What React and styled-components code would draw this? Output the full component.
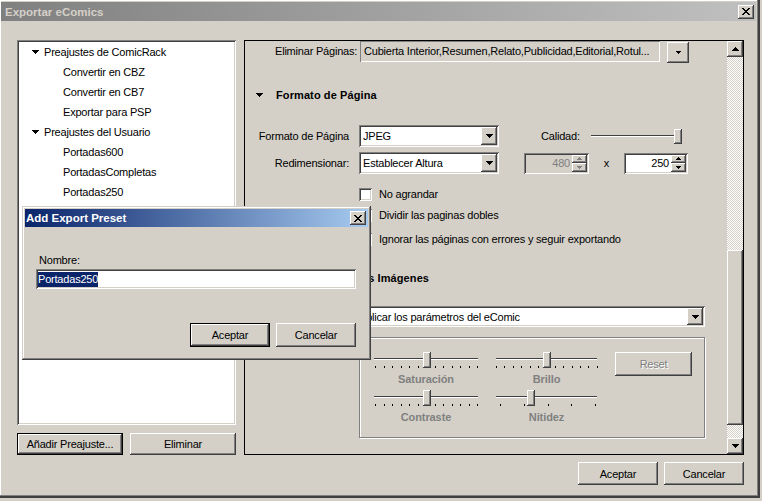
import React from 'react';
import styled, { createGlobalStyle, css } from 'styled-components';

const Global = createGlobalStyle`
  html, body { margin: 0; padding: 0; background: #d4d0c8; }
  body {
    font-family: "Liberation Sans", Arial, sans-serif;
    font-size: 11px;
    letter-spacing: -0.2px;
    color: #000;
  }
  * { box-sizing: border-box; }
`;

const raised = css`
  box-shadow: inset -1px -1px #404040, inset 1px 1px #fff, inset -2px -2px #808080, inset 2px 2px #d4d0c8;
`;
const sunken = css`
  box-shadow: inset 1px 1px #808080, inset -1px -1px #fff, inset 2px 2px #404040, inset -2px -2px #d4d0c8;
`;
const defaultRaised = css`
  box-shadow: inset 0 0 0 1px #000, inset -2px -2px #404040, inset 2px 2px #fff, inset -3px -3px #808080, inset 3px 3px #d4d0c8;
`;

/* ---------- glyphs ---------- */
const Tri = ({ dir = 'down', size = 4, color = '#000' }) => {
  const w = size * 2 - 1;
  const rects = [];
  for (let i = 0; i < size; i++) {
    const y = dir === 'down' ? i : size - 1 - i;
    rects.push(<rect key={i} x={i} y={y} width={w - 2 * i} height={1} />);
  }
  return (
    <svg width={w} height={size} fill={color} shapeRendering="crispEdges" style={{ display: 'block' }}>
      {rects}
    </svg>
  );
};

const XGlyph = () => {
  const rows = [
    [[0, 2], [6, 2]],
    [[1, 2], [5, 2]],
    [[2, 4]],
    [[3, 2]],
    [[2, 4]],
    [[1, 2], [5, 2]],
    [[0, 2], [6, 2]],
  ];
  return (
    <svg width="8" height="7" fill="#000" shapeRendering="crispEdges" style={{ display: 'block' }}>
      {rows.map((r, y) => r.map(([x, w], i) => <rect key={`${y}-${i}`} x={x} y={y} width={w} height={1} />))}
    </svg>
  );
};

/* ---------- window chrome ---------- */
const Window = styled.div`
  position: relative;
  width: 760px;
  height: 498px;
  padding: 2px 0 0 1px;
  background: #d4d0c8;
  box-shadow: inset -1px -1px #404040, inset -2px -2px #404040, inset -3px -3px #808080, inset 1px 1px #fff;
  display: flex;
  flex-direction: column;
`;

const TitleBar = styled.div`
  height: ${p => (p.$active ? 18 : 19)}px;
  width: ${p => (p.$active ? 'auto' : '755px')};
  display: flex;
  align-items: center;
  justify-content: space-between;
  padding: 0 2px 0 ${p => (p.$active ? 1 : 4)}px;
  background: ${p =>
    p.$active ? 'linear-gradient(90deg, #0a246a, #a6caf0)' : 'linear-gradient(90deg, #808080, #c0c0c0)'};
  color: ${p => (p.$active ? '#fff' : '#d4d0c8')};
  font-weight: bold;
  font-size: 11.5px;
  letter-spacing: 0;
`;

const CloseButton = styled.div`
  width: 16px;
  height: 14px;
  background: #d4d0c8;
  ${raised};
  display: flex;
  align-items: center;
  justify-content: center;
`;

const Body = styled.div`
  padding: 19px 0 0 16px;
  display: flex;
  flex-direction: column;
`;

const Main = styled.div`
  display: grid;
  grid-template-columns: 219px 500px;
  column-gap: 8px;
  height: 415px;
`;

const LeftCol = styled.div`
  display: flex;
  flex-direction: column;
  gap: 8px;
`;

const Tree = styled.div`
  flex: 1;
  background: #fff;
  ${sunken};
  padding: 2px;
`;

const TreeRow = styled.div`
  height: 20px;
  display: flex;
  align-items: center;
  gap: 5px;
  padding-left: ${p => p.$indent}px;
  white-space: nowrap;
`;

const ButtonRow = styled.div`
  display: flex;
  gap: ${p => p.$gap || 7}px;
  justify-content: ${p => p.$justify || 'flex-start'};
  margin-top: ${p => p.$mt || 0}px;
`;

const Button = styled.div`
  width: ${p => p.$w}px;
  height: ${p => p.$h || 22}px;
  background: #d4d0c8;
  ${p => (p.$default ? defaultRaised : raised)};
  display: flex;
  align-items: center;
  justify-content: center;
  color: ${p => (p.$disabled ? '#808080' : '#000')};
  text-shadow: ${p => (p.$disabled ? '1px 1px #fff' : 'none')};
  white-space: nowrap;
`;

const Footer = styled.div`
  margin-top: 7px;
  width: 727px;
  display: flex;
  justify-content: flex-end;
  gap: 6px;
`;

/* ---------- right panel ---------- */
const Panel = styled.div`
  border: 1px solid #000;
  display: flex;
  overflow: hidden;
`;

const PanelContent = styled.div`
  flex: 1;
  display: flex;
  flex-direction: column;
  overflow: hidden;
`;

const FieldRow = styled.div`
  height: 22px;
  display: flex;
  align-items: flex-start;
  padding-left: 30px;
`;

const FieldLabel = styled.div`
  width: 85px;
  line-height: 21px;
  white-space: nowrap;
`;

const ReadOnlyField = styled.div`
  width: 300px;
  height: 21px;
  background: #d4d0c8;
  box-shadow: inset 1px 1px #808080, inset -1px -1px #fff;
  padding: 0 3px 0 4px;
  line-height: 20px;
  white-space: nowrap;
  overflow: hidden;
`;

const DropButton = styled.div`
  margin: 1px 0 0 7px;
  width: 22px;
  height: 21px;
  background: #d4d0c8;
  ${raised};
  display: flex;
  align-items: center;
  justify-content: center;
`;

const SectionHeader = styled.div`
  margin-top: ${p => p.$mt}px;
  height: 16px;
  display: flex;
  align-items: center;
  gap: 13px;
  padding-left: 11px;
  font-weight: bold;
  letter-spacing: 0.1px;
  white-space: nowrap;
`;

const FormGrid = styled.div`
  margin-top: 22px;
  display: grid;
  grid-template-columns: 104px 140px 1fr;
  grid-auto-rows: 22px;
  column-gap: 10px;
  row-gap: 5px;
`;

const FormLabel = styled.div`
  text-align: right;
  line-height: 22px;
  white-space: nowrap;
`;

const ExtraCell = styled.div`
  padding-left: 15px;
  display: flex;
  align-items: center;
`;

const Combo = styled.div`
  width: ${p => p.$w}px;
  height: ${p => p.$h || 22}px;
  margin-left: ${p => p.$ml || 0}px;
  margin-top: ${p => p.$mt || 0}px;
  background: #fff;
  ${sunken};
  padding: 2px;
  display: flex;
  align-items: center;
`;

const ComboText = styled.span`
  flex: 1;
  padding-left: 2px;
  white-space: nowrap;
  overflow: hidden;
`;

const ComboButton = styled.div`
  width: 16px;
  height: 100%;
  background: #d4d0c8;
  ${raised};
  display: flex;
  align-items: center;
  justify-content: center;
`;

const SideLabel = styled.div`
  margin-left: 17px;
  width: 50px;
  white-space: nowrap;
`;

const Slider = styled.div`
  position: relative;
  width: ${p => p.$w}px;
  height: ${p => p.$h}px;
`;

const SliderChannel = styled.div`
  position: absolute;
  left: 0;
  right: 0;
  top: ${p => p.$top}px;
  height: 2px;
  border-top: 1px solid #404040;
  border-bottom: 1px solid #fff;
`;

const SliderThumb = styled.div`
  position: absolute;
  top: 0;
  width: 8px;
  height: ${p => p.$h}px;
  background: #d4d0c8;
  ${raised};
`;

const Tick = styled.div`
  position: absolute;
  top: 14px;
  width: 1px;
  height: 2px;
  background: #000;
`;

const Spin = styled.div`
  width: ${p => p.$w}px;
  height: 21px;
  background: ${p => (p.$disabled ? '#d4d0c8' : '#fff')};
  ${sunken};
  padding: 2px;
  display: flex;
`;

const SpinValue = styled.span`
  flex: 1;
  text-align: right;
  padding-right: 2px;
  line-height: 17px;
  color: ${p => (p.$disabled ? '#808080' : '#000')};
`;

const SpinButtons = styled.div`
  width: 15px;
  display: flex;
  flex-direction: column;
`;

const SpinButton = styled.div`
  flex: 1;
  background: #d4d0c8;
  ${raised};
  display: flex;
  align-items: center;
  justify-content: center;
`;

const Times = styled.div`
  width: 35px;
  text-align: center;
`;

const CheckList = styled.div`
  margin-top: 10px;
  padding-left: 114px;
  display: flex;
  flex-direction: column;
`;

const CheckRow = styled.div`
  height: 20px;
  margin-top: ${p => p.$mt || 0}px;
  display: flex;
  align-items: center;
  gap: 7px;
  white-space: nowrap;
`;

const CheckBox = styled.div`
  width: 13px;
  height: 13px;
  background: #fff;
  ${sunken};
`;

const GroupBox = styled.div`
  margin: 10px 0 0 114px;
  width: 346px;
  height: 101px;
  border: 1px solid #808080;
  box-shadow: inset 1px 1px #fff, 1px 1px #fff;
  padding: 14px 0 0 14px;
  display: grid;
  grid-template-columns: 104px 101px 77px;
  grid-template-rows: 34px 34px;
  column-gap: 18px;
  row-gap: 4px;
`;

const AdjustSlider = styled.div`
  display: flex;
  flex-direction: column;
`;

const AdjustLabel = styled.div`
  height: 14px;
  line-height: 14px;
  text-align: center;
  font-weight: bold;
  color: #808080;
  letter-spacing: -0.1px;
`;

const ScrollBar = styled.div`
  width: 16px;
  display: flex;
  flex-direction: column;
`;

const ScrollArrow = styled.div`
  height: 16px;
  background: #d4d0c8;
  ${raised};
  display: flex;
  align-items: center;
  justify-content: center;
`;

const ScrollTrack = styled.div`
  height: ${p => (p.$h ? `${p.$h}px` : 'auto')};
  flex: ${p => (p.$h ? 'none' : 1)};
  background: repeating-conic-gradient(#fff 0% 25%, #d4d0c8 0% 50%) 0 0 / 2px 2px;
`;

const ScrollThumb = styled.div`
  height: ${p => p.$h}px;
  background: #d4d0c8;
  ${raised};
`;

/* ---------- dialog ---------- */
const Dialog = styled.div`
  position: absolute;
  left: 22px;
  top: 206px;
  width: 349px;
  height: 154px;
  background: #d4d0c8;
  box-shadow: inset -1px -1px #404040, inset 1px 1px #d4d0c8, inset -2px -2px #808080, inset 2px 2px #fff;
  padding: 3px;
  display: flex;
  flex-direction: column;
`;

const DialogBody = styled.div`
  padding: 0 12px 10px 11px;
  display: flex;
  flex-direction: column;
`;

const DialogLabel = styled.div`
  margin-top: 26px;
  height: 14px;
  line-height: 14px;
  padding-left: 3px;
`;

const TextInput = styled.div`
  margin-top: 2px;
  height: 20px;
  background: #fff;
  ${sunken};
  padding: 2px;
  display: flex;
  align-items: center;
`;

const Selection = styled.span`
  background: #0a246a;
  color: #fff;
  line-height: 15px;
`;

/* ---------- data ---------- */
const treeItems = [
  { label: 'Preajustes de ComicRack', parent: true },
  { label: 'Convertir en CBZ' },
  { label: 'Convertir en CB7' },
  { label: 'Exportar para PSP' },
  { label: 'Preajustes del Usuario', parent: true },
  { label: 'Portadas600' },
  { label: 'PortadasCompletas' },
  { label: 'Portadas250' },
];

const AdjSlider = ({ label, w, thumb, ticks }) => (
  <AdjustSlider>
    <Slider $w={w} $h={20}>
      <SliderChannel $top={6} />
      {ticks.map(t => (
        <Tick key={t} style={{ left: t }} />
      ))}
      <SliderThumb $h={16} style={{ left: thumb }} />
    </Slider>
    <AdjustLabel>{label}</AdjustLabel>
  </AdjustSlider>
);

const range = (n, start, step) => Array.from({ length: n }, (_, i) => Math.round(start + i * step));

export default function App() {
  return (
    <>
      <Global />
      <Window>
        <TitleBar>
          <span>Exportar eComics</span>
          <CloseButton>
            <XGlyph />
          </CloseButton>
        </TitleBar>
        <Body>
          <Main>
            <LeftCol>
              <Tree>
                {treeItems.map(it => (
                  <TreeRow key={it.label} $indent={it.parent ? 13 : 44}>
                    {it.parent && <Tri size={4} />}
                    <span>{it.label}</span>
                  </TreeRow>
                ))}
              </Tree>
              <ButtonRow>
                <Button $w={106} $default>
                  Añadir Preajuste...
                </Button>
                <Button $w={106}>Eliminar</Button>
              </ButtonRow>
            </LeftCol>

            <Panel>
              <PanelContent>
                <FieldRow>
                  <FieldLabel>Eliminar Páginas:</FieldLabel>
                  <ReadOnlyField>Cubierta Interior,Resumen,Relato,Publicidad,Editorial,Rotul...</ReadOnlyField>
                  <DropButton>
                    <Tri size={3} />
                  </DropButton>
                </FieldRow>

                <SectionHeader $mt={24}>
                  <Tri size={4} />
                  <span>Formato de Página</span>
                </SectionHeader>

                <FormGrid>
                  <FormLabel>Formato de Página</FormLabel>
                  <Combo $w={140}>
                    <ComboText>JPEG</ComboText>
                    <ComboButton>
                      <Tri size={4} />
                    </ComboButton>
                  </Combo>
                  <ExtraCell>
                    <SideLabel>Calidad:</SideLabel>
                    <Slider $w={90} $h={15}>
                      <SliderChannel $top={6} />
                      <SliderThumb $h={15} style={{ left: 83 }} />
                    </Slider>
                  </ExtraCell>

                  <FormLabel>Redimensionar:</FormLabel>
                  <Combo $w={140}>
                    <ComboText>Establecer Altura</ComboText>
                    <ComboButton>
                      <Tri size={4} />
                    </ComboButton>
                  </Combo>
                  <ExtraCell>
                    <Spin $w={65} $disabled>
                      <SpinValue $disabled>480</SpinValue>
                      <SpinButtons>
                        <SpinButton>
                          <Tri dir="up" size={3} color="#808080" />
                        </SpinButton>
                        <SpinButton>
                          <Tri size={3} color="#808080" />
                        </SpinButton>
                      </SpinButtons>
                    </Spin>
                    <Times>x</Times>
                    <Spin $w={64}>
                      <SpinValue>250</SpinValue>
                      <SpinButtons>
                        <SpinButton>
                          <Tri dir="up" size={3} />
                        </SpinButton>
                        <SpinButton>
                          <Tri size={3} />
                        </SpinButton>
                      </SpinButtons>
                    </Spin>
                  </ExtraCell>
                </FormGrid>

                <CheckList>
                  <CheckRow>
                    <CheckBox />
                    <span>No agrandar</span>
                  </CheckRow>
                  <CheckRow $mt={1}>
                    <CheckBox />
                    <span>Dividir las paginas dobles</span>
                  </CheckRow>
                  <CheckRow $mt={4}>
                    <CheckBox />
                    <span>Ignorar las páginas con errores y seguir exportando</span>
                  </CheckRow>
                </CheckList>

                <SectionHeader $mt={21}>
                  <Tri size={4} />
                  <span>Tratamiento de las Imágenes</span>
                </SectionHeader>

                <Combo $w={350} $h={21} $ml={110} $mt={20}>
                  <ComboText>Aplicar los parámetros del eComic</ComboText>
                  <ComboButton>
                    <Tri size={4} />
                  </ComboButton>
                </Combo>

                <GroupBox>
                  <AdjSlider label="Saturación" w={104} thumb={49} ticks={range(13, 1, 8.5)} />
                  <AdjSlider label="Brillo" w={101} thumb={47} ticks={range(13, 0, 8.4)} />
                  <Button $w={77} $h={24} $disabled>
                    Reset
                  </Button>
                  <AdjSlider label="Contraste" w={104} thumb={49} ticks={range(13, 1, 8.5)} />
                  <AdjSlider label="Nitidez" w={101} thumb={31} ticks={range(5, 4, 23.75)} />
                </GroupBox>
              </PanelContent>

              <ScrollBar>
                <ScrollArrow>
                  <Tri dir="up" size={4} />
                </ScrollArrow>
                <ScrollTrack $h={193} />
                <ScrollThumb $h={175} />
                <ScrollTrack />
                <ScrollArrow>
                  <Tri size={4} />
                </ScrollArrow>
              </ScrollBar>
            </Panel>
          </Main>

          <Footer>
            <Button $w={80} $h={23}>
              Aceptar
            </Button>
            <Button $w={80} $h={23}>
              Cancelar
            </Button>
          </Footer>
        </Body>

        <Dialog>
          <TitleBar $active>
            <span>Add Export Preset</span>
            <CloseButton>
              <XGlyph />
            </CloseButton>
          </TitleBar>
          <DialogBody>
            <DialogLabel>Nombre:</DialogLabel>
            <TextInput>
              <Selection>Portadas250</Selection>
            </TextInput>
            <ButtonRow $gap={6} $justify="flex-end" $mt={34}>
              <Button $w={80} $h={24} $default>
                Aceptar
              </Button>
              <Button $w={80} $h={24}>
                Cancelar
              </Button>
            </ButtonRow>
          </DialogBody>
        </Dialog>
      </Window>
    </>
  );
}
